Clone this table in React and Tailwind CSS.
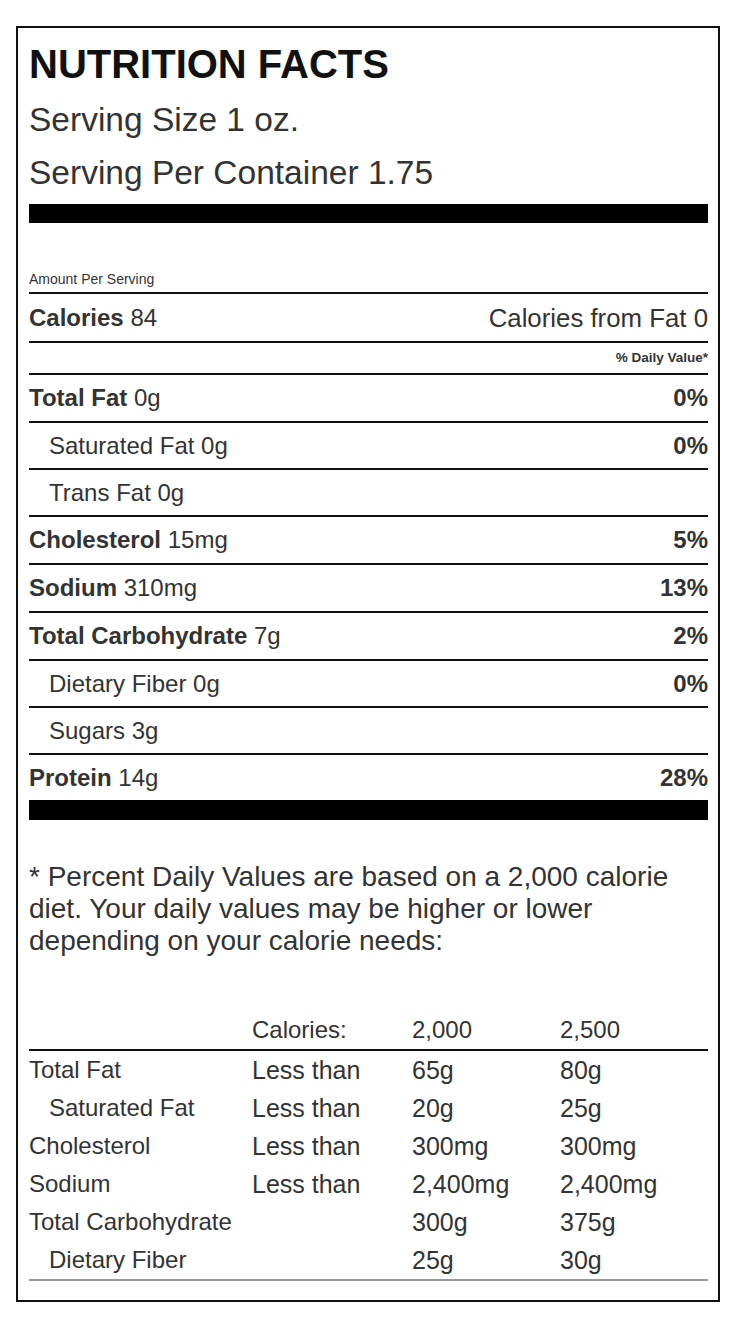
import React from "react";

const rows = [
  { label: "Total Fat", value: "0g", dv: "0%", bold: true, h: "h-[48px]" },
  { label: "Saturated Fat", value: "0g", dv: "0%", indent: true, h: "h-[47px]" },
  { label: "Trans Fat", value: "0g", dv: "", indent: true, h: "h-[47px]" },
  { label: "Cholesterol", value: "15mg", dv: "5%", bold: true, h: "h-[48px]" },
  { label: "Sodium", value: "310mg", dv: "13%", bold: true, h: "h-[48px]" },
  { label: "Total Carbohydrate", value: "7g", dv: "2%", bold: true, h: "h-[48px]" },
  { label: "Dietary Fiber", value: "0g", dv: "0%", indent: true, h: "h-[47px]" },
  { label: "Sugars", value: "3g", dv: "", indent: true, h: "h-[47px]" },
  { label: "Protein", value: "14g", dv: "28%", bold: true, h: "h-[47px]" },
];

const table = [
  { n: "Total Fat", c: "Less than", a: "65g", b: "80g" },
  { n: "Saturated Fat", c: "Less than", a: "20g", b: "25g", indent: true },
  { n: "Cholesterol", c: "Less than", a: "300mg", b: "300mg" },
  { n: "Sodium", c: "Less than", a: "2,400mg", b: "2,400mg" },
  { n: "Total Carbohydrate", c: "", a: "300g", b: "375g" },
  { n: "Dietary Fiber", c: "", a: "25g", b: "30g", indent: true },
];

export default function App() {
  return (
    <div className="min-h-[1322px] bg-white pt-[26px] font-['Liberation_Sans',Arial,sans-serif] text-[#333]">
      <div className="ml-[16px] w-[704px] border-2 border-[#111] pl-[11px] pr-[10px] pb-[19px]">
        <div className="pt-[16px] h-[56px] text-[40px] leading-[40px] font-bold text-[#111]">
          NUTRITION FACTS
        </div>
        <div className="mt-[16px] h-[40px] text-[33.5px] leading-[40px]">Serving Size 1 oz.</div>
        <div className="mt-[13px] h-[40px] text-[33.5px] leading-[40px]">Serving Per Container 1.75</div>
        <div className="mt-[11px] h-[19px] bg-black" />
        <div className="mt-[48px] h-[16px] text-[14px] leading-[16px]">Amount Per Serving</div>
        <div className="mt-[5px] flex h-[49px] items-center justify-between border-t-2 border-[#111] text-[24px] leading-[28px]">
          <span>
            <span className="font-bold">Calories</span> 84
          </span>
          <span className="text-[25.8px]">Calories from Fat 0</span>
        </div>
        <div className="flex h-[32px] items-center justify-end border-t-2 border-[#111] text-[13.5px] leading-[16px] font-bold">
          % Daily Value*
        </div>
        {rows.map((r) => (
          <div
            key={r.label}
            className={`flex ${r.h} items-center justify-between border-t-2 border-[#111] text-[24px] leading-[28px]`}
          >
            <span className={r.indent ? "pl-[20px]" : ""}>
              <span className={r.bold ? "font-bold" : ""}>{r.label}</span> {r.value}
            </span>
            <span className="font-bold">{r.dv}</span>
          </div>
        ))}
        <div className="h-[20px] bg-black" />
        <p className="mt-[41px] text-[28px] leading-[32px]">
          * Percent Daily Values are based on a 2,000 calorie diet. Your daily values may be higher or lower depending on your calorie needs:
        </p>
        <div className="mt-[54px] text-[24px] leading-[38px]">
          <div className="grid h-[40px] grid-cols-[223px_160px_148px_1fr] border-b-2 border-[#111]">
            <span />
            <span>Calories:</span>
            <span>2,000</span>
            <span>2,500</span>
          </div>
          {table.map((t) => (
            <div key={t.n} className="grid h-[38px] grid-cols-[223px_160px_148px_1fr]">
              <span className={t.indent ? "pl-[20px]" : ""}>{t.n}</span>
              <span className="text-[25px]">{t.c}</span>
              <span className="text-[25px]">{t.a}</span>
              <span className="text-[25px]">{t.b}</span>
            </div>
          ))}
          <div className="h-[2px] bg-[#999]" />
        </div>
      </div>
    </div>
  );
}
